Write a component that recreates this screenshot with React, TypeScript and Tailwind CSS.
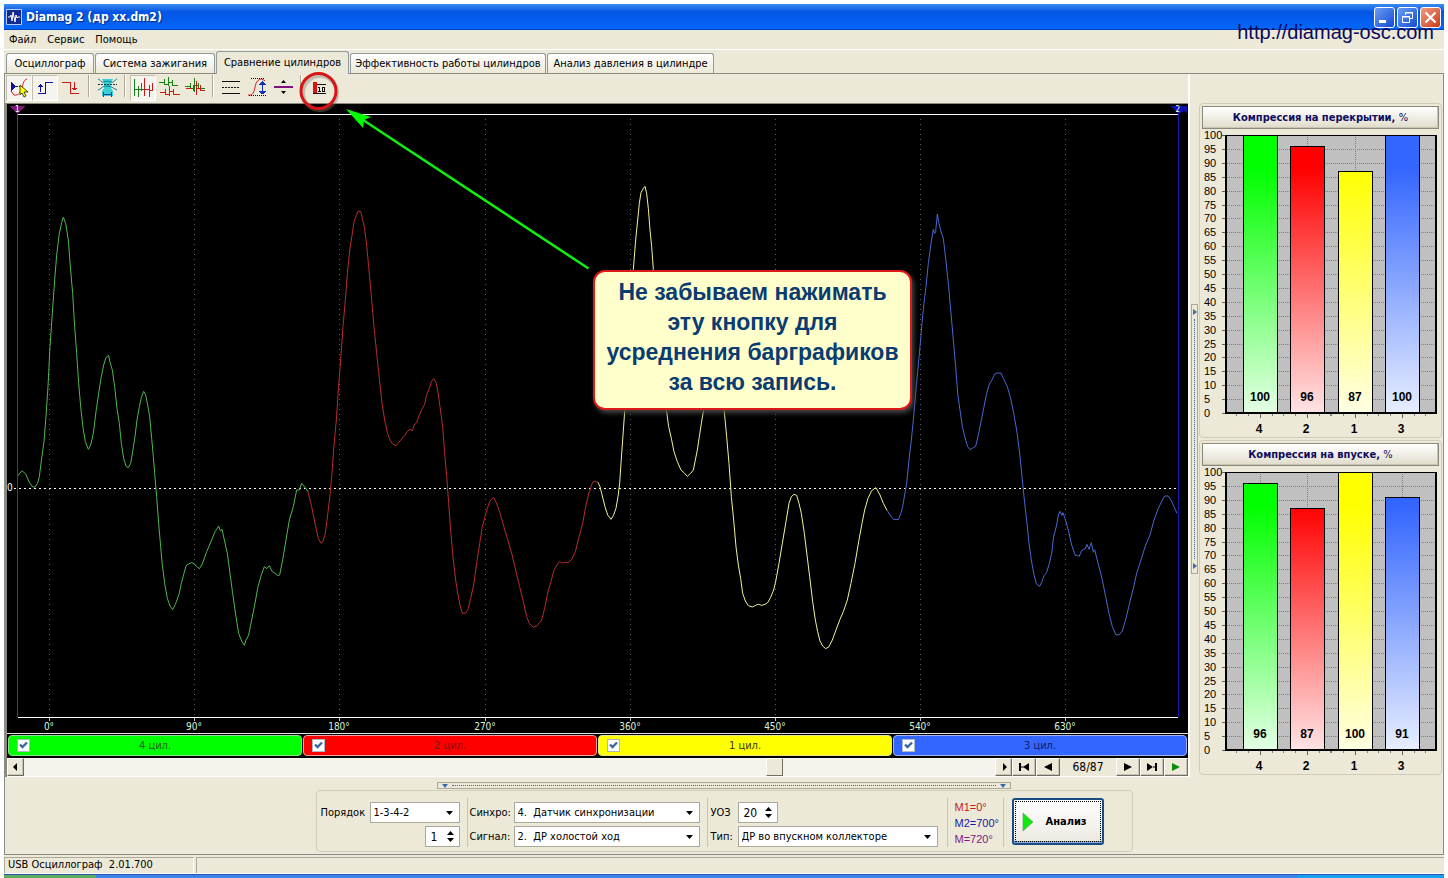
import React, { useState } from "react";

/* ---------- waveform samples, in thirds of a plot unit ---------- */
const traces = [
  {
    stroke: "#4fb84f",
    x: 0,
    y: 190,
    points:
      "54,857 60,848 67,843 77,852 88,877 96,889 104,892 113,880 118,860 125,805 132,755 138,680 144,590 150,470 157,370 164,270 170,195 178,130 185,98 190,82 197,100 205,150 211,230 218,310 224,410 230,490 236,580 243,660 250,720 256,755 265,778 272,765 280,730 288,665 296,610 303,565 311,525 318,503 326,496 329,513 337,540 344,590 351,655 358,700 364,760 371,805 378,828 385,833 392,820 398,785 405,740 411,690 418,650 424,622 431,604 437,615 443,645 449,680 455,745 460,800 464,850 470,920 476,1000 482,1070 487,1125 494,1180 502,1225 510,1248 518,1259 526,1243 537,1213 544,1180 552,1150 558,1128 565,1122 575,1118 584,1122 590,1130 598,1136 607,1122 620,1085 635,1050 645,1025 650,1018 656,1008 661,1022 666,1018 672,1045 682,1090 690,1150 698,1210 708,1280 716,1330 725,1353 733,1366 738,1350 746,1335 755,1290 765,1240 774,1190 784,1155 793,1130 800,1136 808,1127 816,1144 825,1150 833,1157 839,1155 848,1110 858,1050 868,990 880,950 890,900 898,900 905,880 912,888 924,905",
  },
  {
    stroke: "#b82c2c",
    x: 290,
    y: 190,
    points:
      "54,905 65,950 75,1000 85,1045 93,1060 99,1055 106,1030 113,975 120,915 126,850 132,765 139,690 145,600 152,510 159,410 166,330 173,240 180,175 187,130 192,95 199,76 204,64 212,64 217,85 223,110 230,165 237,240 246,340 252,410 260,490 268,565 276,640 284,690 292,728 300,750 308,762 318,767 325,758 334,748 345,736 352,724 360,718 367,722 372,707 380,697 388,675 397,655 404,643 409,617 418,595 424,575 431,566 438,577 443,600 450,650 458,710 464,790 471,870 476,940 482,1020 489,1100 497,1170 504,1215 511,1250 517,1270 526,1270 534,1258 542,1225 551,1185 560,1120 569,1060 577,1010 585,980 592,955 600,932 611,922 618,936 628,962 640,1005 652,1045 665,1090 677,1140 689,1190 700,1235 710,1280 718,1300 730,1312 740,1308 755,1290 764,1255 774,1205 784,1170 793,1138 803,1122 809,1114 815,1119 825,1117 835,1118 845,1108 856,1085 866,1045 878,1000 886,955 895,915 903,890 908,877 915,873 924,877",
  },
  {
    stroke: "#f2f29a",
    x: 590,
    y: 170,
    points:
      "24,937 30,950 37,978 45,1010 53,1035 63,1048 70,1037 78,1015 84,980 89,940 93,880 98,810 104,725 110,620 118,480 124,370 130,298 137,210 143,150 148,100 153,68 160,55 165,49 170,70 175,115 180,180 185,230 190,298 198,420 210,570 220,660 230,725 236,770 244,805 252,845 262,875 273,900 282,908 292,919 302,910 310,900 316,870 322,840 328,800 334,760 340,725 350,650 362,590 372,575 384,590 395,650 403,725 410,800 417,880 424,980 431,1050 438,1130 445,1185 452,1225 458,1270 466,1293 475,1307 487,1311 497,1306 505,1303 515,1306 525,1303 533,1298 542,1282 551,1260 558,1230 567,1180 577,1120 588,1055 597,1000 604,980 612,973 620,976 627,1000 634,1030 643,1090 651,1155 659,1220 668,1295 676,1350 683,1385 690,1413 698,1428 707,1436 717,1430 727,1410 738,1380 750,1348 760,1325 772,1290 783,1240 795,1180 806,1115 816,1060 824,1020 834,985 845,962 857,953 862,960 870,975 880,1000 891,1021",
  },
  {
    stroke: "#4a68d0",
    x: 870,
    y: 190,
    points:
      "51,960 60,975 70,988 85,989 92,972 98,950 104,915 110,880 117,810 124,750 130,690 137,610 143,545 150,470 156,400 162,340 168,290 175,220 183,160 190,118 194,130 197,125 202,72 207,100 213,125 220,145 227,205 236,290 243,370 250,450 257,530 263,610 270,660 277,710 287,750 293,770 300,779 310,773 317,769 325,735 334,690 342,650 350,610 358,582 367,568 374,552 382,549 393,549 400,565 412,590 422,625 431,670 440,720 449,790 456,860 463,930 470,990 477,1060 484,1110 491,1150 499,1182 509,1189 516,1175 522,1157 530,1147 538,1120 545,1090 551,1040 560,1005 565,975 570,964 576,976 579,968 585,985 595,1020 605,1065 616,1097 622,1095 627,1100 635,1082 645,1077 651,1063 657,1078 664,1058 670,1087 674,1079 683,1115 696,1165 707,1220 717,1270 727,1310 738,1335 748,1334 757,1323 768,1285 780,1235 790,1195 800,1150 813,1110 827,1065 840,1035 852,990 865,955 877,930 884,918 895,918 903,930 912,950 921,970",
  },
];

const degrees = [
  { x: 49, label: "0°" },
  { x: 194, label: "90°" },
  { x: 339, label: "180°" },
  { x: 485, label: "270°" },
  { x: 630, label: "360°" },
  { x: 775, label: "450°" },
  { x: 920, label: "540°" },
  { x: 1065, label: "630°" },
];

const tabs = [
  { label: "Осциллограф", width: "w-[88px]" },
  { label: "Система зажигания", width: "w-[120px]" },
  { label: "Сравнение цилиндров", width: "w-[133px]" },
  { label: "Эффективность работы цилиндров", width: "w-[196px]" },
  { label: "Анализ давления в цилиндре", width: "w-[167px]" },
];

const cylinders = [
  { label: "4 цил.", style: "bg-[#00ff00] border-[#8be08b] text-[#1c641c]" },
  { label: "2 цил.", style: "bg-[#ff0000] border-[#f0a0a0] text-[#7a1010]" },
  { label: "1 цил.", style: "bg-[#ffff00] border-[#e6e68c] text-[#3c3c10]" },
  { label: "3 цил.", style: "bg-[#3366ff] border-[#a0b4f0] text-[#10206a]" },
];

/* ---------- small parts ---------- */
function Sep() {
  return <div className="mr-[5px] ml-1 h-[22px] w-px shrink-0 bg-[#aca899] shadow-[1px_0_0_#fff]" />;
}

function Tool({ label, pressed, children }: { label: string; pressed?: boolean; children: React.ReactNode }) {
  return (
    <button
      type="button"
      aria-label={label}
      className={
        pressed
          ? "h-[26px] w-[26px] shrink-0 border border-[#c4c0b0] border-r-white border-b-white bg-[#f6f4ee]"
          : "h-[26px] w-[26px] shrink-0 border border-transparent"
      }
    >
      <svg className="block" width="24" height="24" viewBox="1 1 24 24" fill="none" shapeRendering="crispEdges">
        {children}
      </svg>
    </button>
  );
}

function Toolbar() {
  return (
    <div className="flex h-[29px] items-start pt-px pl-px">
      <Tool label="Маркер" pressed>
        <path d="M5 7v9l5-4.500z" fill="#1010a0" />
        <path d="M10 11.500h7" stroke="#1010a0" strokeDasharray="2 1" />
        <path d="M21 4c-4 1-4 6-5 9s-3 8-8 7l-3-4" stroke="#d02020" shapeRendering="auto" />
        <path d="M14 10v10l2-2 2 4 2-1-2-4h4z" fill="#ffff00" stroke="#202000" shapeRendering="auto" strokeWidth=".8" />
      </Tool>
      <Tool label="Передний фронт" pressed>
        <path d="M6 18.500h7.500V7.500H21" stroke="#1010a0" />
        <path d="M8.500 9v8M6 11.500h5M7 10.500h3" stroke="#1010a0" />
      </Tool>
      <Tool label="Задний фронт">
        <path d="M4 7.500h8.500v11H21" stroke="#d01818" />
        <path d="M16.500 7v8M14 13.500h5M15 14.500h3" stroke="#d01818" />
      </Tool>
      <Sep />
      <Tool label="Автонастройка">
        <g shapeRendering="auto">
          <path d="M8 4h11l-2 4v5l2 3v5H8v-5l2-3V8z" fill="#38d0d8" />
          <path d="M4 4c3 1 3 4 6 3s3-1 7 0 3-2 6-3M4 15c3-1 4-4 9-4s7 3 10 4" stroke="#107888" />
          <path d="M4 9.500h19" stroke="#203030" strokeDasharray="2 1" />
          <path d="M9 19.500h9M9.500 17v5M17.500 17v5" stroke="#0a3a9a" />
        </g>
      </Tool>
      <Sep />
      <Tool label="Вид последовательный" pressed>
        <path d="M4.500 4v17M5 14.500h3.500v-4M8.500 14v8M11.500 8v8M9 14.500h4.500" stroke="#188018" />
        <path d="M14.500 3v18M15 14.500h4.500v-5M19.500 14v8M22.500 8v8M20 15.500h3" stroke="#d01818" />
      </Tool>
      <Tool label="Вид раздельный">
        <path d="M3 7.500h5M8.500 4v6M9 9.500h3M12.500 2v9M13 7.500h3M16.500 5v5h5" stroke="#188018" />
        <path d="M4 17.500h5M9.500 14v6M10 19.500h3M13.500 11v10M14 16.500h3M17.500 14v5h6" stroke="#d01818" />
      </Tool>
      <Tool label="Вид совмещённый">
        <path d="M3 11.500h5M8.500 8v6M9 13.500h3M12.500 3v14M13 10.500h3M16.500 8v5h6" stroke="#188018" />
        <path d="M4 13.500h6M11.500 10v6M14.500 6v14M15 13.500h4M18.500 10v6M19 15.500h4" stroke="#d01818" />
      </Tool>
      <Sep />
      <Tool label="Линии уровня">
        <path d="M4 6.500h18M4 18.500h18" stroke="#101010" />
        <path d="M4 12.500h18" stroke="#101010" strokeDasharray="2 1" />
      </Tool>
      <Tool label="Размах">
        <path d="M4 20c5 1 6-3 7-8s3-8 7-8l3 2" stroke="#d01818" shapeRendering="auto" />
        <path d="M7 3.500h14M5 20.500h17" stroke="#101010" strokeDasharray="1 1" />
        <path d="M18.500 6v13M15 9.500h7M16 8.500h5M17 7.500h3M15 16.500h7M16 17.500h5M17 18.500h3" stroke="#1030c0" />
      </Tool>
      <Tool label="Сдвиг">
        <path d="M4 12h19" stroke="#801080" strokeWidth="2" />
        <path d="M11 8h5l-2.500-3zM11 16h5l-2.500 3z" fill="#000" shapeRendering="auto" />
      </Tool>
      <Sep />
      <div className="relative flex">
        <Tool label="Усреднение барграфиков">
          <path d="M7 7h4v12H7z" fill="#e01010" />
          <path d="M11 9.500h9M7 18.500h13" stroke="#101010" />
          <path d="M13.500 12v4M12 12.500h1M12 16.500h3M16.500 12.500h2v4h-2z" stroke="#101010" />
        </Tool>
        <svg className="absolute -top-1.5 -left-2 z-10" width="44" height="44" viewBox="0 0 44 44" fill="none" aria-hidden="true">
          <circle cx="22" cy="24" r="17" stroke="#807c70" strokeOpacity=".4" strokeWidth="4" />
          <circle cx="20.500" cy="22" r="17.500" stroke="#d81414" strokeWidth="3" />
        </svg>
      </div>
    </div>
  );
}

function Scope() {
  return (
    <div className="relative min-h-[400px] flex-1 bg-black">
      <svg className="absolute inset-0 h-full w-full" viewBox="7 104 1181 629" preserveAspectRatio="none" fill="none">
        <g shapeRendering="crispEdges">
          {degrees.map((d) => (
            <g key={d.x} stroke="#5c5c5c">
              <path d={`M${d.x}.5 119V717`} strokeDasharray="1 4" />
              <path d={`M${d.x}.5 718V721`} stroke="#c0c0c0" />
            </g>
          ))}
          <path d="M18 114.500H1178M18 717.500H1178" stroke="#fff" />
          <path d="M14 488.500H1178" stroke="#fff" strokeDasharray="2 3" />
          <path d="M17.500 106V717" stroke="#7a207a" />
          <path d="M1178.500 106V717" stroke="#1818b8" />
          <path d="M10 106h15l-7.500 8z" fill="#7a1a7a" />
          <path d="M1170 106h17v7l-3-2l-5 3z" fill="#1010b0" />
        </g>
        {traces.map((t) => (
          <g key={t.x} transform={`translate(${t.x} ${t.y}) scale(.33333)`}>
            <polyline points={t.points} stroke={t.stroke} vectorEffect="non-scaling-stroke" strokeWidth="1" />
          </g>
        ))}
      </svg>
      {degrees.map((d) => (
        <span
          key={d.x}
          className="absolute bottom-0 -translate-x-1/2 text-[10px] leading-3 text-[#d8f4d8]"
          style={{ left: `${((d.x - 7) / 1181) * 100}%` }}
        >
          {d.label}
        </span>
      ))}
      <span className="absolute top-[61%] left-0 -translate-y-1/2 text-[10px] leading-[10px] text-white">0</span>
      <span className="absolute top-0.5 left-2 text-[8px] leading-2 text-white">1</span>
      <span className="absolute top-0.5 right-2 text-[8px] leading-2 text-white">2</span>

      <svg className="absolute top-0 left-[339px]" width="246" height="168" viewBox="346 104 246 168" fill="none" aria-hidden="true">
        <path d="M360 118L588.500 268.500" stroke="#10f010" strokeWidth="2.500" />
        <path d="M346 109L371 117L364 120L363 128Z" fill="#00ff00" />
      </svg>
      <div className="absolute top-[166px] left-[586px] w-[319px] rounded-[12px] border-2 border-[#e01818] bg-[#ffffcb] pt-[5px] pb-[11px] text-center font-['Liberation_Sans',sans-serif] text-[23px] leading-[30px] font-bold text-[#0a3c72] shadow-[2px_3px_5px_#444]">
        Не забываем нажимать
        <br />
        эту кнопку для
        <br />
        усреднения барграфиков
        <br />
        за всю запись.
      </div>
    </div>
  );
}

function CylinderBar() {
  const [on, setOn] = useState([true, true, true, true]);
  return (
    <div className="flex h-[25px] gap-px border-t border-[#e0e0e0] bg-black p-px pb-0.5">
      {cylinders.map((c, i) => (
        <label key={c.label} className={`relative flex flex-1 items-center justify-center rounded border text-[11px] ${c.style}`}>
          <span className="absolute left-2 flex h-[13px] w-[13px]">
            <input
              type="checkbox"
              checked={on[i]}
              onChange={() => setOn(on.map((v, k) => (k === i ? !v : v)))}
              className="h-[13px] w-[13px] appearance-none border border-[#a8b8c8] bg-white"
            />
            {on[i] && (
              <svg className="pointer-events-none absolute inset-0" width="13" height="13" viewBox="0 0 13 13" fill="none">
                <path d="M3 5.500L5.500 8L10 3.500" stroke="#3a66a4" strokeWidth="2.400" />
              </svg>
            )}
          </span>
          {c.label}
        </label>
      ))}
    </div>
  );
}

function NavButton({ label, width, color = "#000", d }: { label: string; width: string; color?: string; d: string }) {
  return (
    <button
      type="button"
      aria-label={label}
      className={`flex h-[18px] shrink-0 items-center justify-center border border-white border-r-[#716f64] border-b-[#716f64] bg-[#ece9d8] shadow-[inset_-1px_-1px_0_#c8c4b4] ${width}`}
    >
      <svg width="12" height="10" viewBox="0 0 12 10" fill={color}>
        <path d={d} />
      </svg>
    </button>
  );
}

function ScrollRow() {
  return (
    <div className="flex h-[19px] items-start border-b border-white">
      <div className="flex h-[18px] flex-1 bg-[#f5f4ec]">
        <NavButton label="Влево" width="w-[17px]" d="M7 1v8L3 5z" />
        <div className="grow-[743]" />
        <div className="h-[18px] w-[17px] border border-white border-r-[#716f64] border-b-[#716f64] bg-[#ece9d8]" />
        <div className="grow-[212]" />
        <NavButton label="Вправо" width="w-[17px]" d="M5 1v8l4-4z" />
      </div>
      <NavButton label="Первый" width="w-[24px]" d="M1 1h2v8H1zM11 1v8L5 5zM3 4.500h3v1H3z" />
      <NavButton label="Предыдущий" width="w-[24px]" d="M10 1v8L2 5z" />
      <div className="w-[56px] shrink-0 text-center text-[12px] leading-[18px] text-black">68/87</div>
      <NavButton label="Следующий" width="w-[24px]" d="M2 1v8l8-4z" />
      <NavButton label="Последний" width="w-[24px]" d="M9 1h2v8H9zM1 1v8l6-4zM6 4.500h3v1H6z" />
      <NavButton label="Пуск" width="w-[24px]" color="#0a8a0a" d="M2 1v8l8-4z" />
    </div>
  );
}

function Dropdown({ id, value, width }: { id: string; value: string; width: string }) {
  return (
    <div className={`relative ${width}`}>
      <select
        id={id}
        className="block h-[21px] w-full appearance-none border border-[#aca899] bg-white pl-[3px] text-[11px] text-black"
        defaultValue={value}
      >
        <option>{value}</option>
      </select>
      <svg className="pointer-events-none absolute top-[9px] right-[7px]" width="7" height="4" viewBox="0 0 7 4">
        <path d="M0 0h7L3.500 4z" />
      </svg>
    </div>
  );
}

function Spinner({ id, label, initial, width }: { id: string; label: string; initial: number; width: string }) {
  const [n, setN] = useState(initial);
  return (
    <div className={`flex h-[21px] border border-[#aca899] bg-white ${width}`}>
      <input
        id={id}
        aria-label={label}
        value={n}
        onChange={(e) => setN(Number(e.target.value) || 0)}
        className="w-0 flex-1 bg-transparent pl-[5px] text-[12px] outline-none"
      />
      <div className="flex w-[17px] flex-col items-center justify-center gap-[3px]">
        <button type="button" aria-label="Больше" onClick={() => setN(n + 1)}>
          <svg className="block" width="7" height="4" viewBox="0 0 7 4">
            <path d="M0 4h7L3.500 0z" />
          </svg>
        </button>
        <button type="button" aria-label="Меньше" onClick={() => setN(n - 1)}>
          <svg className="block" width="7" height="4" viewBox="0 0 7 4">
            <path d="M0 0h7L3.500 4z" />
          </svg>
        </button>
      </div>
    </div>
  );
}

function Divider() {
  return <div className="h-[49px] w-px bg-[#c8c4b0]" />;
}

function Controls() {
  return (
    <div className="flex h-[62px] w-[817px] rounded border border-[#d0ccb8] pt-[7px] pl-1">
      <div className="flex w-[139px] flex-col items-end gap-[3px] pt-1">
        <div className="flex w-full items-center justify-between">
          <label htmlFor="order">Порядок</label>
          <Dropdown id="order" value="1-3-4-2" width="w-[90px]" />
        </div>
        <Spinner id="first" label="Первый цилиндр" initial={1} width="w-[35px]" />
      </div>
      <div className="ml-[7px]">
        <Divider />
      </div>
      <div className="ml-[2px] flex w-[230px] flex-col gap-[3px] pt-1">
        <div className="flex items-center justify-between">
          <label htmlFor="sync">Синхро:</label>
          <Dropdown id="sync" value={"4.\u00a0 Датчик синхронизации"} width="w-[186px]" />
        </div>
        <div className="flex items-center justify-between">
          <label htmlFor="signal">Сигнал:</label>
          <Dropdown id="signal" value={"2.\u00a0 ДР холостой ход"} width="w-[186px]" />
        </div>
      </div>
      <div className="ml-[7px]">
        <Divider />
      </div>
      <div className="ml-[3px] grid w-[227px] grid-cols-[27px_200px] items-center gap-y-[3px] self-start pt-1">
        <label htmlFor="advance">УОЗ</label>
        <Spinner id="advance" label="УОЗ" initial={20} width="w-[40px]" />
        <label htmlFor="type">Тип:</label>
        <Dropdown id="type" value="ДР во впускном коллекторе" width="w-[200px]" />
      </div>
      <div className="ml-[9px]">
        <Divider />
      </div>
      <div className="ml-[7px] w-[48px] pt-px font-['Liberation_Sans',sans-serif] text-[11px] leading-4 whitespace-nowrap">
        <div className="text-[#c01c1c]">M1=0°</div>
        <div className="text-[#1818a8]">M2=700°</div>
        <div className="text-[#801a80]">M=720°</div>
      </div>
      <Divider />
      <button
        type="button"
        className="ml-[8px] flex h-[47px] w-[92px] items-center gap-3 rounded-[3px] border-2 border-[#1c4c84] bg-gradient-to-b from-white to-[#ece9e0] pl-2 text-[11px] font-bold text-black shadow-[inset_0_-2px_0_#8aa8dc] outline-1 -outline-offset-4 outline-black outline-dotted"
      >
        <svg width="12" height="20" viewBox="0 0 12 20">
          <path d="M1 1v18l10-9z" fill="#10e810" stroke="#60a860" strokeWidth=".7" />
        </svg>
        Анализ
      </button>
    </div>
  );
}

const barSlots = [1243, 1290, 1338, 1385];
const barColors = ["#00ff00", "#ff0000", "#ffff00", "#3366ff"];
const tints = ["#e4ffe4", "#ffe4e4", "#ffffe4", "#e8eeff"];
const order = ["4", "2", "1", "3"];
const levels = Array.from({ length: 21 }, (_, i) => 100 - i * 5);

function BarPanel({ title, values, id }: { title: string; values: number[]; id: string }) {
  return (
    <section className="rounded border border-[#d0ccb8] px-[2px] pt-[2px]">
      <button
        type="button"
        className="block h-[23px] w-full border border-[#8c887a] bg-gradient-to-b from-white to-[#e0dccb] text-center text-[11px] font-bold text-[#0c0c60] shadow-[inset_-1px_-1px_0_#c8c4b4]"
      >
        {title} <span className="font-normal">%</span>
      </button>
      <svg className="block w-full" viewBox="1202 129 237 308" fontFamily="Liberation Sans, Arial, sans-serif">
        <defs>
          {barColors.map((c, i) => (
            <linearGradient key={c} id={`${id}${i}`} x1="0" x2="0" y1="135" y2="413" gradientUnits="userSpaceOnUse">
              <stop offset=".12" stopColor={c} />
              <stop offset="1" stopColor={tints[i]} />
            </linearGradient>
          ))}
        </defs>
        <g shapeRendering="crispEdges">
          <rect x="1226" y="135" width="210" height="278" fill="#c0c0c0" />
          {levels.map((v) => {
            const y = Math.round(413 - v * 2.78) + 0.5;
            return (
              <g key={v}>
                <path d={`M1227 ${y}H1436`} stroke="#808080" strokeDasharray="1 1" />
                <path d={`M1222 ${y}H1226`} stroke="#606060" />
              </g>
            );
          })}
          {barSlots.map((x) => (
            <g key={x}>
              <path d={`M${x + 17}.5 135V413`} stroke="#808080" strokeDasharray="1 1" />
              <path d={`M${x + 17}.5 414V418`} stroke="#606060" />
              {[-24, -12, 12, 23].map((o) => (
                <path key={o} d={`M${x + 17 + o}.5 414V416`} stroke="#808080" />
              ))}
            </g>
          ))}
          {values.map((v, i) => {
            const top = Math.round(413 - v * 2.78);
            return (
              <rect key={i} x={barSlots[i] + 0.5} y={top + 0.5} width="34" height={413 - top} fill={`url(#${id}${i})`} stroke="#000" />
            );
          })}
          <path d="M1226 135.500H1437" stroke="#000" />
          <path d="M1226 135V414M1225 413H1437M1436 135V414" stroke="#000" strokeWidth="2" />
        </g>
        {levels.map((v) => (
          <text key={v} x="1204" y={Math.round(417 - v * 2.78)} fontSize="11">
            {v}
          </text>
        ))}
        {values.map((v, i) => (
          <g key={i} fontSize="12" fontWeight="bold" textAnchor="middle">
            <text x={barSlots[i] + 17} y="401">
              {v}
            </text>
            <text x={barSlots[i] + 16} y="433">
              {order[i]}
            </text>
          </g>
        ))}
      </svg>
    </section>
  );
}

function TitleBar() {
  return (
    <header className="relative flex h-[26px] items-center bg-gradient-to-b from-[#3a8cf0] via-[#0455e4] via-30% to-[#0468fc] pr-[3px] pl-0.5 shadow-[inset_0_-1px_0_#0040b8]">
      <svg width="16" height="16" viewBox="0 0 16 16" fill="none">
        <path d="M.5.500h15v15H.5z" fill="#102a90" stroke="#b8ccf0" />
        <path d="M2 8h2l1-2 1 6 1-9 2 10 1-7 1 3 1-1h2" stroke="#fff" />
      </svg>
      <h1 className="ml-1 flex-1 text-[12px] font-bold text-white [text-shadow:1px_1px_1px_#002a80]">Diamag 2 (др xx.dm2)</h1>
      <div className="flex gap-0.5">
        <button type="button" aria-label="Свернуть" className="h-[21px] w-[21px] rounded-[3px] border border-white bg-gradient-to-br from-[#6a9cf4] to-[#1648d4]">
          <svg width="19" height="19" viewBox="0 0 19 19">
            <path d="M4 12h7v3H4z" fill="#fff" />
          </svg>
        </button>
        <button type="button" aria-label="Восстановить" className="h-[21px] w-[21px] rounded-[3px] border border-white bg-gradient-to-br from-[#6a9cf4] to-[#1648d4]">
          <svg width="19" height="19" viewBox="0 0 19 19" fill="none" stroke="#fff">
            <path d="M7.500 7V4.500h7v6H12M7 5h8" />
            <path d="M4.500 8.500h7v6h-7zM4 9h8" />
          </svg>
        </button>
        <button type="button" aria-label="Закрыть" className="h-[21px] w-[21px] rounded-[3px] border border-white bg-gradient-to-br from-[#f09a80] to-[#c83a10]">
          <svg width="19" height="19" viewBox="0 0 19 19" stroke="#fff" strokeWidth="2.200">
            <path d="M4.500 4.500l10 10M14.500 4.500l-10 10" />
          </svg>
        </button>
      </div>
      <a
        href="http://diamag-osc.com"
        className="absolute top-[16px] right-[10px] z-10 font-['Liberation_Sans',sans-serif] text-[20px] leading-6 text-[#0a0a5c]"
      >
        http://diamag-osc.com
      </a>
    </header>
  );
}

export default function App() {
  const [tab, setTab] = useState(2);
  return (
    <div className="flex min-h-screen flex-col bg-white px-1 pt-1 font-['DejaVu_Sans_Condensed','Liberation_Sans',sans-serif] text-[11px] leading-[14px] text-black">
      <div className="flex flex-1 flex-col bg-[#ece9d8]">
        <TitleBar />
        <nav className="flex h-5 items-center gap-[11px] border-b border-white pl-[5px]">
          <button type="button">Файл</button>
          <button type="button">Сервис</button>
          <button type="button">Помощь</button>
        </nav>

        <div className="flex h-[23px] items-end gap-px pl-0.5" role="tablist">
          {tabs.map((t, i) => (
            <button
              key={t.label}
              type="button"
              role="tab"
              aria-selected={tab === i}
              onClick={() => setTab(i)}
              className={`shrink-0 rounded-t-[3px] border border-b-0 border-[#919b9c] whitespace-nowrap ${t.width} ${
                tab === i
                  ? "z-10 -mb-px h-[23px] bg-[#ece9d8] pb-px"
                  : "h-5 bg-gradient-to-b from-white to-[#ece9d8]"
              }`}
            >
              {t.label}
            </button>
          ))}
        </div>

        <main className="flex flex-1 flex-col border border-[#8c8c84]">
          <div className="flex flex-1">
            <div className="flex min-w-0 flex-1 flex-col">
              <Toolbar />
              <div className="flex flex-1 flex-col border-t border-l-2 border-[#8c8a80]">
                <Scope />
                <CylinderBar />
                <ScrollRow />
              </div>
            </div>
            <div className="flex w-[11px] shrink-0 justify-center border-l-2 border-white pt-[27px]">
              <div className="flex h-[270px] w-[7px] flex-col items-center self-center border border-[#aca899] py-1">
                <svg width="4" height="6" viewBox="0 0 4 6" fill="#3a6aa8">
                  <path d="M0 0v6l4-3z" />
                </svg>
                <div className="my-1 flex-1 border-l border-dotted border-[#3a6aa8]" />
                <svg width="4" height="6" viewBox="0 0 4 6" fill="#3a6aa8">
                  <path d="M0 0v6l4-3z" />
                </svg>
              </div>
            </div>
            <aside className="flex w-[244px] shrink-0 flex-col gap-[2px] pt-[29px] pr-px">
              <BarPanel id="overlap" title="Компрессия на перекрытии," values={[100, 96, 87, 100]} />
              <BarPanel id="intake" title="Компрессия на впуске," values={[96, 87, 100, 91]} />
            </aside>
          </div>

          <div className="mb-0.5 flex flex-col items-center pt-[5px]">
            <div className="flex h-[7px] w-[574px] items-center border border-[#aca899] px-1">
              <svg width="6" height="4" viewBox="0 0 6 4" fill="#3a6aa8">
                <path d="M0 0h6L3 4z" />
              </svg>
              <div className="mx-1 flex-1 border-t border-dotted border-[#3a6aa8]" />
              <svg width="6" height="4" viewBox="0 0 6 4" fill="#3a6aa8">
                <path d="M0 0h6L3 4z" />
              </svg>
            </div>
            <div className="mt-px">
              <Controls />
            </div>
          </div>
        </main>

        <footer className="mt-0.5 flex h-[17px] gap-0.5 border-b border-white">
          <div className="w-[190px] border border-[#aca899] border-r-white border-b-0 pl-[3px]">USB Осциллограф&nbsp; 2.01.700</div>
          <div className="flex-1 border border-r-0 border-b-0 border-[#aca899]" />
        </footer>
        <div className="flex h-1 border-t border-[#2458b8] bg-[#3a84e4]">
          <div className="w-[92px] bg-[#5cae5c]" />
          <div className="flex-1" />
          <div className="w-[147px] bg-[#18a0ec]" />
        </div>
      </div>
    </div>
  );
}
